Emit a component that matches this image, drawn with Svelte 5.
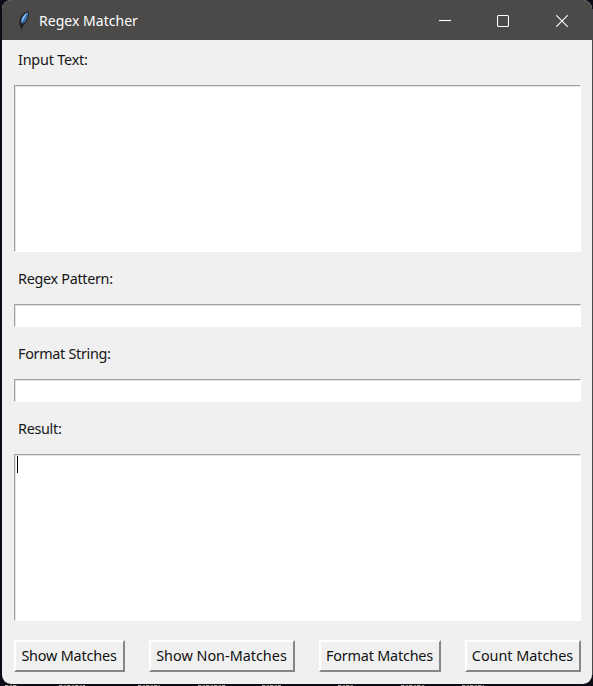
<script>
  let input = $state('');
  let pattern = $state('');
  let format = $state('');
  let result = $state('');
  const buttons = [
    { label: 'Show Matches', width: 111, spacing: -0.18 },
    { label: 'Show Non-Matches', width: 146, spacing: 0 },
    { label: 'Format Matches', width: 122, spacing: -0.2 },
    { label: 'Count Matches', width: 116, spacing: -0.03 }
  ];
  // [left, width] of the terminal text peeking out under the window
  const specks = [[5, 13], [59, 26], [138, 22], [198, 28], [262, 19], [338, 15], [401, 24], [462, 22]];
</script>

<div class="desktop">
  <main class="window">
    <header>
      <svg class="feather" width="14" height="20" viewBox="0 0 14 20">
        <path d="M3.8 18.8 C3.6 16.5 1.8 13.5 2.6 10.2 C3.5 6 6.8 1.8 11.6 1 C12.5 5.5 10.5 11.5 7 14.5 L5 18.8Z" fill="#1d1f22" />
        <path d="M4.2 13 C3.6 9 6.1 4.3 10.9 2 C11 6.8 9 11.6 5.6 13.8Z" fill="#4787d0" />
        <path d="M4.7 10.8 C5 7.8 7 4.6 10 2.9 C8.9 6.6 6.9 10 5.2 12Z" fill="#8dbdf0" />
        <path d="M9.6 5 C8 8.5 6 11.5 4.6 16.2" fill="none" stroke="#17304f" stroke-width=".7" />
      </svg>
      <h1>Regex Matcher</h1>
      <div class="controls">
        <svg width="12" height="12" viewBox="0 0 12 12"><path d="M0 5.5H12" /></svg>
        <svg width="12" height="12" viewBox="0 0 12 12"><rect x=".5" y=".5" width="11" height="11" rx="1.3" /></svg>
        <svg width="12" height="12" viewBox="0 0 12 12"><path d="M.3.3 11.7 11.7M11.7.3.3 11.7" /></svg>
      </div>
    </header>
    <section>
      <label for="input"><span class="l-input">Input Text:</span></label>
      <textarea id="input" class="field" bind:value={input}></textarea>
      <label for="pattern"><span>Regex Pattern:</span></label>
      <input id="pattern" class="field" bind:value={pattern} />
      <label for="format"><span>Format String:</span></label>
      <input id="format" class="field" bind:value={format} />
      <label for="result"><span>Result:</span></label>
      <div class="result-box">
        <textarea id="result" class="field" bind:value={result}></textarea>
        <i class="caret"></i>
      </div>
      <div class="actions">
        {#each buttons as b}
          <button style:width="{b.width}px" style:letter-spacing="{b.spacing}px">{b.label}</button>
        {/each}
      </div>
    </section>
  </main>
  {#each specks as [x, w]}
    <i class="speck" style:left="{x}px" style:width="{w}px"></i>
  {/each}
</div>

<style>
  :global(body) { margin: 0; overflow: hidden; }
  * { box-sizing: border-box; }
  .desktop {
    position: relative;
    width: 593px; height: 686px; padding: 0 1px 2px 2px;
    background:
      linear-gradient(#484a4c, #484a4c) right 9px / 1px 666px no-repeat,
      #0b0c16;
    background-position: right 0 top 9px, 0 0;
  }
  .speck {
    position: absolute; bottom: 0; height: 1px;
    background: repeating-linear-gradient(90deg, #aaa 0 3px, #3c3c42 3px 5px, #858585 5px 7px, #222 7px 8px);
  }
  .window {
    height: 684px; border-radius: 9px; overflow: hidden; background: #f0f0f0;
    font-family: "Noto Sans", "Open Sans", sans-serif; font-size: 14.4px; color: #161616;
  }
  header {
    height: 40px; display: flex; align-items: center; padding: 0 24px 0 15px;
    background: #4c4a48; color: #fff;
  }
  .feather { flex: none; margin-top: -1px; }
  h1 { margin: 1px 0 0 8px; font-size: 14px; line-height: 20px; font-weight: 400; letter-spacing: .03px; white-space: nowrap; }
  .controls { margin-left: auto; display: flex; gap: 47px; }
  .controls svg { fill: none; stroke: #fff; stroke-width: 1.1; margin-top: 1px; }
  .controls svg:first-child { margin-right: -1px; }
  section { padding: 0 11px 0 12px; display: flex; flex-direction: column; }
  label { display: flex; height: 52px; padding: 17px 0 0 4px; line-height: 20px; white-space: nowrap; letter-spacing: -.31px; }
  label:first-child { height: 45px; padding-top: 10px; }
  .l-input { letter-spacing: -.2px; }
  .field {
    display: block; width: 567px; height: 23px; margin: 0; padding: 1px 3px; resize: none;
    border: 1px solid; border-color: #a0a0a0 #fff #fff #a0a0a0; border-radius: 0;
    box-shadow: inset 1px 1px #e3e3e3; background: #fff; outline: none;
    font: 14px "Liberation Mono", monospace;
  }
  textarea.field { height: 167px; }
  .result-box { position: relative; }
  .caret { position: absolute; left: 3px; top: 2px; width: 1px; height: 17px; background: #000; }
  .actions { display: flex; justify-content: space-between; padding-top: 19px; width: 567px; }
  button {
    display: flex; justify-content: center; align-items: center;
    height: 32px; padding: 0 1px 1px 0; border: 2px solid;
    border-color: #fff #858585 #858585 #fff; border-radius: 0;
    background: #f0f0f0; color: #111; font: inherit; white-space: nowrap;
  }
</style>
